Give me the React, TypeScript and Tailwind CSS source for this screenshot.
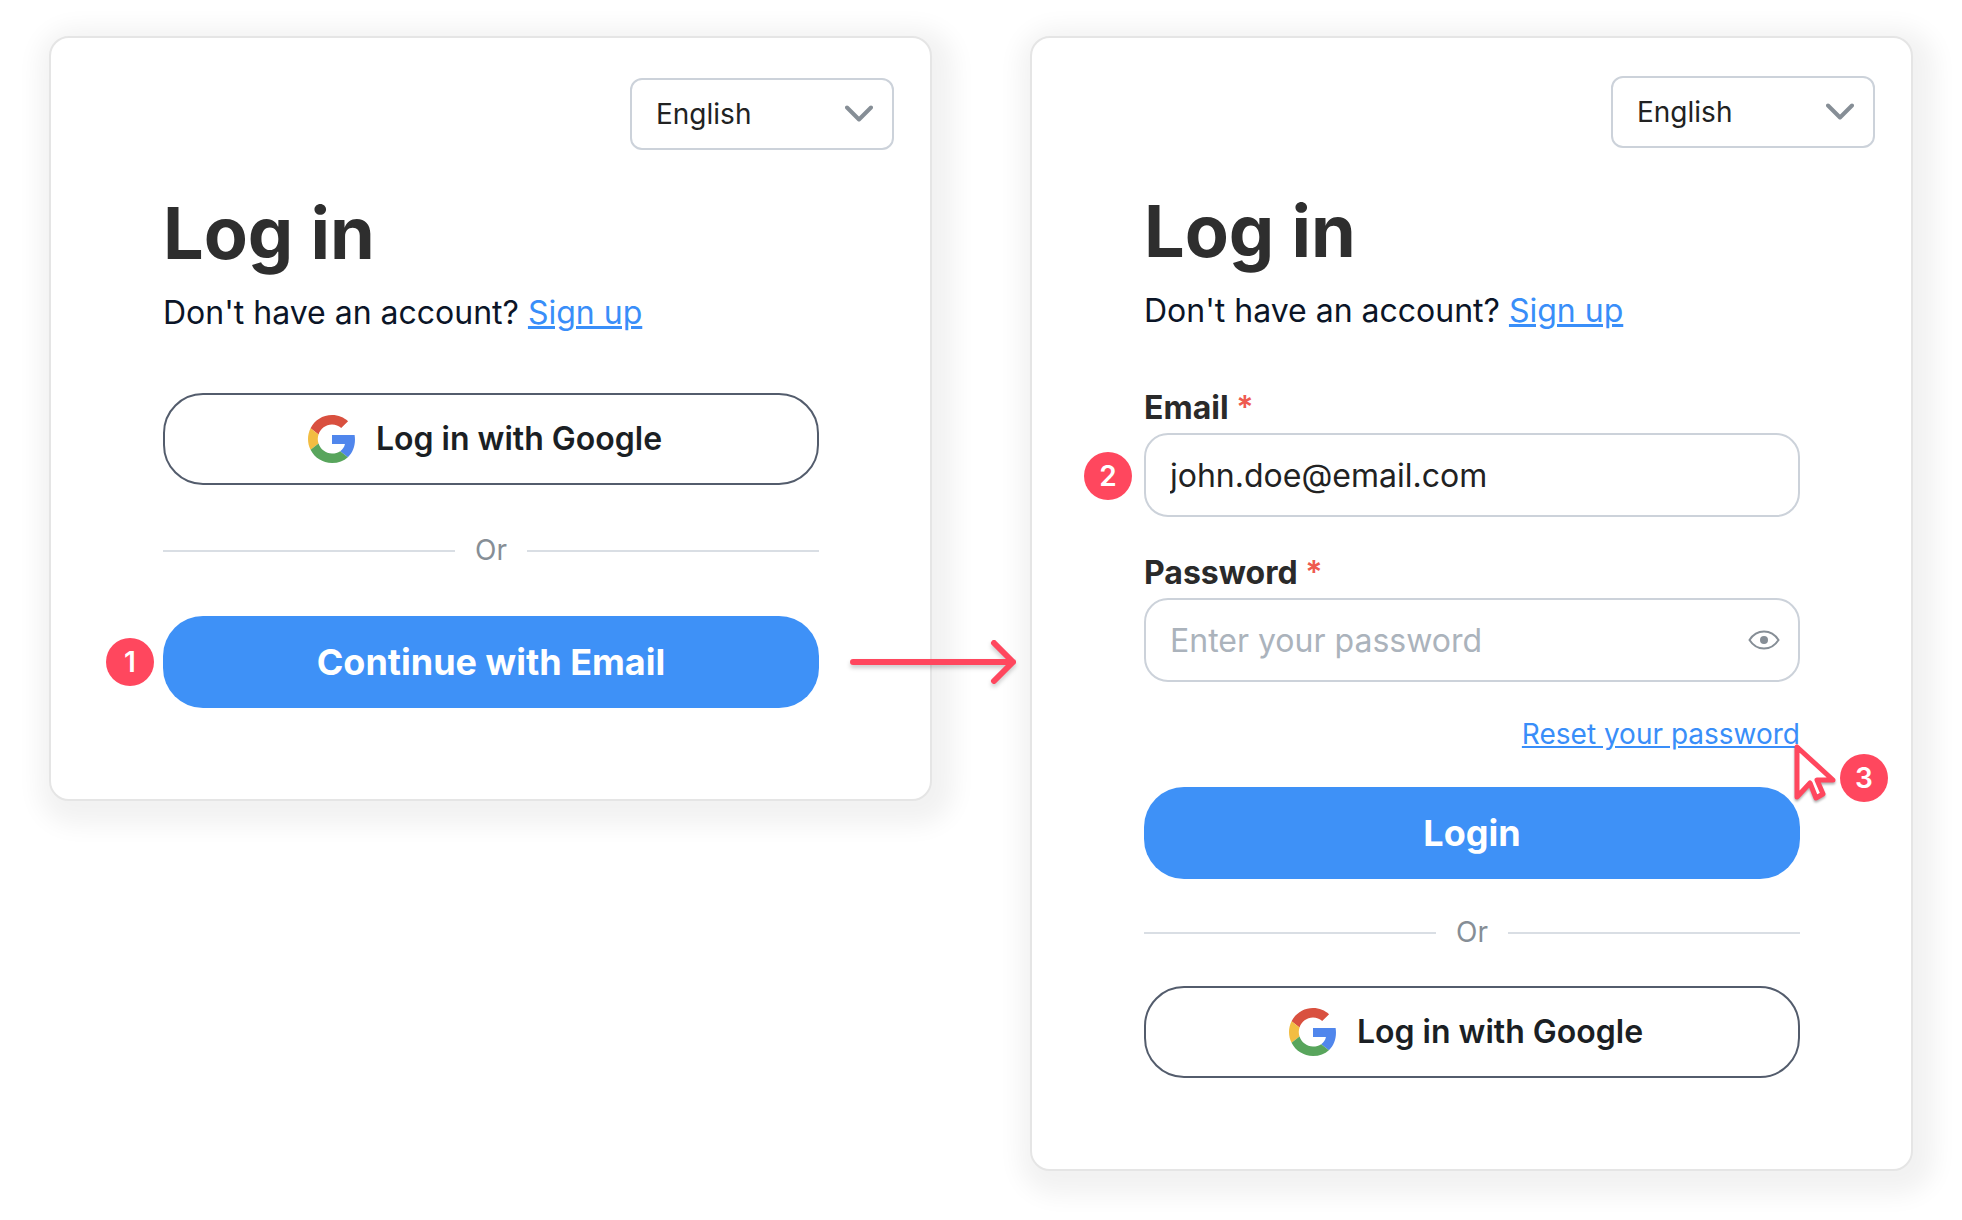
import React from 'react';

type CardProps = {
  className: string;
  children: React.ReactNode;
};

function Card({ className, children }: CardProps) {
  return (
    <section
      className={`rounded-[20px] border-2 border-[#e5e5e5] bg-white pb-[91px] shadow-[6px_8px_24px_16px_rgba(0,0,0,0.055)] ${className}`}
    >
      {children}
    </section>
  );
}

function LanguageSelect({ id }: { id: string }) {
  return (
    <div className="flex justify-end pr-9">
      <div className="relative">
        <select
          id={id}
          aria-label="Language"
          defaultValue="en"
          className="h-[72px] w-[264px] appearance-none rounded-xl border-2 border-[#ccd2da] bg-white pl-6 text-[28px] text-[#222222]"
        >
          <option value="en">English</option>
        </select>
        <svg
          viewBox="0 0 28 18"
          className="pointer-events-none absolute top-[27px] right-[21px] h-[18px] w-7"
          fill="none"
          stroke="#868e96"
          strokeWidth="4"
          strokeLinecap="round"
          strokeLinejoin="round"
        >
          <path d="M2 2.5 14 14.5 26 2.5" />
        </svg>
      </div>
    </div>
  );
}

function Heading() {
  return (
    <>
      <h1 className="mt-[43px] text-[72px] leading-[80px] font-bold text-[#2e2e2e]">Log in</h1>
      <p className="mt-4 text-[32px] leading-[48px] text-[#0b1527]">
        Don't have an account?{' '}
        <a href="#signup" className="text-[#398ef9] underline">
          Sign up
        </a>
      </p>
    </>
  );
}

function GoogleButton() {
  return (
    <button
      type="button"
      className="flex h-[92px] w-full items-center justify-center gap-5 rounded-[40px] border-2 border-[#535c6c] bg-white pr-3 text-[32px] font-semibold text-[#1b1f24]"
    >
      <svg viewBox="0 0 48 48" className="size-12">
        <path
          fill="#d9503f"
          d="M24 9.5c3.54 0 6.71 1.22 9.21 3.6l6.85-6.85C35.9 2.38 30.47 0 24 0 14.62 0 6.51 5.38 2.56 13.22l7.98 6.19C12.43 13.72 17.74 9.5 24 9.5z"
        />
        <path
          fill="#5086ec"
          d="M46.98 24.55c0-1.57-.15-3.09-.38-4.55H24v9.02h12.94c-.58 2.96-2.26 5.48-4.78 7.18l7.73 6c4.51-4.18 7.09-10.36 7.09-17.65z"
        />
        <path
          fill="#f2bd42"
          d="M10.53 28.59c-.48-1.45-.76-2.99-.76-4.59s.27-3.14.76-4.59l-7.98-6.19C.92 16.46 0 20.12 0 24c0 3.88.92 7.54 2.56 10.78l7.97-6.19z"
        />
        <path
          fill="#58a55c"
          d="M24 48c6.48 0 11.93-2.13 15.89-5.81l-7.73-6c-2.15 1.45-4.92 2.3-8.16 2.3-6.26 0-11.57-4.22-13.47-9.91l-7.98 6.19C6.51 42.62 14.62 48 24 48z"
        />
      </svg>
      Log in with Google
    </button>
  );
}

function PrimaryButton({ children }: { children: React.ReactNode }) {
  return (
    <button
      type="button"
      className="h-[92px] w-full rounded-[40px] bg-[#3e91f7] text-[36px] font-bold text-white"
    >
      {children}
    </button>
  );
}

function Divider({ className }: { className: string }) {
  return (
    <div className={`flex items-center gap-5 ${className}`}>
      <span className="h-0.5 flex-1 bg-[#d9dee4]" />
      <span className="text-[28px] leading-[41px] text-[#868e96]">Or</span>
      <span className="h-0.5 flex-1 bg-[#d9dee4]" />
    </div>
  );
}

function Badge({ number, className }: { number: number; className: string }) {
  return (
    <span
      className={`absolute flex size-12 items-center justify-center rounded-full bg-[#ff475e] text-[28px] font-semibold text-white ${className}`}
    >
      {number}
    </span>
  );
}

function FieldLabel({ htmlFor, children }: { htmlFor: string; children: React.ReactNode }) {
  return (
    <label htmlFor={htmlFor} className="mb-[5px] block text-[32px] leading-10 font-bold text-[#2a2a2a]">
      {children} <span className="font-semibold text-[#ee5a50]">*</span>
    </label>
  );
}

const inputClass =
  'block h-[84px] w-full rounded-3xl border-2 border-[#ccd2da] bg-white px-6 text-[32px] text-[#222222] outline-none placeholder:text-[#abb3bc]';

export default function App() {
  return (
    <main className="grid min-h-screen grid-cols-2 items-start gap-x-[98px] bg-white px-[49px] pt-9 pb-12 font-['Inter',sans-serif]">
      <Card className="pt-10">
        <LanguageSelect id="language-start" />
        <div className="pr-[111px] pl-28">
          <Heading />
          <div className="mt-14">
            <GoogleButton />
          </div>
          <Divider className="my-[45px]" />
          <div className="relative">
            <Badge number={1} className="top-[22px] right-full mr-[9px]" />
            <PrimaryButton>Continue with Email</PrimaryButton>
            {/* Arrow to the second step */}
            <svg
              viewBox="0 0 168 52"
              className="absolute top-5 left-full z-10 ml-[30px] h-[52px] w-[168px] drop-shadow-[0_3px_2px_rgba(0,0,0,0.2)]"
              fill="none"
              stroke="#ff475e"
              strokeWidth="6"
              strokeLinecap="round"
              strokeLinejoin="round"
            >
              <path d="M4 26H164M145 7l19 19-19 19" />
            </svg>
          </div>
        </div>
      </Card>

      <Card className="pt-[38px]">
        <LanguageSelect id="language-email" />
        <form className="pr-[111px] pl-28">
          <Heading />
          <div className="mt-[53px]">
            <FieldLabel htmlFor="email">Email</FieldLabel>
            <div className="relative">
              <Badge number={2} className="top-[19px] right-full mr-3" />
              <input id="email" type="email" defaultValue="john.doe@email.com" className={inputClass} />
            </div>
          </div>
          <div className="mt-9">
            <FieldLabel htmlFor="password">Password</FieldLabel>
            <div className="relative">
              <input id="password" type="password" placeholder="Enter your password" className={inputClass} />
              <button
                type="button"
                aria-label="Show password"
                className="absolute inset-y-0 right-5 flex items-center"
              >
                <svg viewBox="0 0 32 20" className="h-5 w-8" fill="none" stroke="#868e96" strokeWidth="2">
                  <path d="M1.5 10C5 4.500 10 1.500 16 1.500S27 4.500 30.500 10C27 15.500 22 18.500 16 18.500S5 15.500 1.500 10Z" />
                  <circle cx="16" cy="10" r="4" fill="#868e96" stroke="none" />
                </svg>
              </button>
            </div>
          </div>
          <div className="relative mt-8 flex justify-end">
            <a href="#reset" className="text-[28px] leading-10 text-[#398ef9] underline">
              Reset your password
            </a>
            <svg
              viewBox="0 0 44 60"
              className="absolute top-[28px] left-full z-10 -ml-2 h-[60px] w-11 drop-shadow-[0_2px_1px_rgba(0,0,0,0.3)]"
              fill="white"
              stroke="#ff475e"
              strokeWidth="5"
              strokeLinejoin="round"
            >
              <path d="M5 5V55L18 41 24 56 31 52 25 38H41Z" />
            </svg>
            <Badge number={3} className="top-[40px] left-full ml-10" />
          </div>
          <div className="mt-[33px]">
            <PrimaryButton>Login</PrimaryButton>
          </div>
          <Divider className="my-[33px]" />
          <GoogleButton />
        </form>
      </Card>
    </main>
  );
}
